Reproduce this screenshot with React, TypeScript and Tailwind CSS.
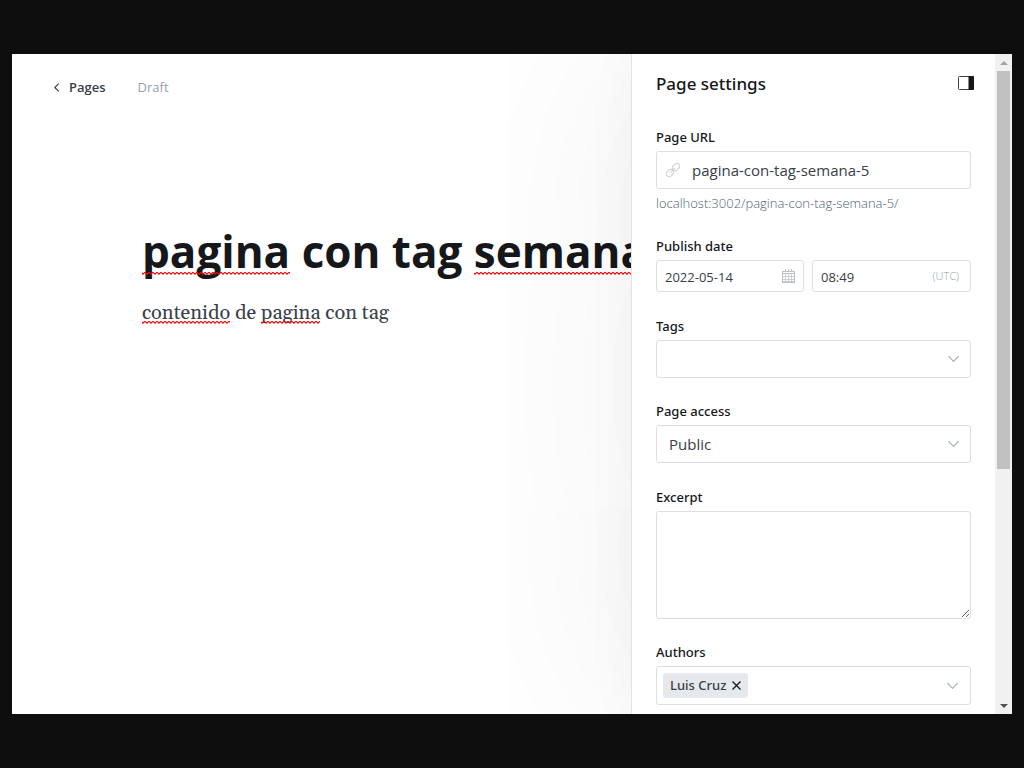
import type { ReactNode } from "react";

const labelClass =
  "block font-['Noto_Sans','Open_Sans',sans-serif] text-[13px] leading-5 font-medium text-[#15171a]";
const fieldClass =
  "block w-full rounded-[3px] border border-[#dddedf] bg-white text-[#394047] outline-none";

function Misspelled({ children, large = false }: { children: ReactNode; large?: boolean }) {
  return (
    <span className="relative inline-block">
      {children}
      <svg
        className={`absolute left-0 h-[3px] w-full ${large ? "bottom-1" : "bottom-[5px]"}`}
        aria-hidden="true"
      >
        <defs>
          <pattern id="squiggle" width="4" height="3" patternUnits="userSpaceOnUse">
            <path d="M-1 .2 1 2.200 3 .2 5 2.200" fill="none" stroke="#ff0000" strokeWidth="1.1" />
          </pattern>
        </defs>
        <rect width="100%" height="3" fill="url(#squiggle)" />
      </svg>
    </span>
  );
}

function Chevron() {
  return (
    <svg
      className="pointer-events-none absolute top-1/2 right-3 size-[11px] -translate-y-1/2"
      viewBox="0 0 11 11"
      fill="none"
      stroke="#abb4be"
      strokeWidth="1.2"
      strokeLinecap="round"
      strokeLinejoin="round"
      aria-hidden="true"
    >
      <path d="M.8 3 5.5 7.8 10.2 3" />
    </svg>
  );
}

function LinkIcon() {
  return (
    <svg
      className="pointer-events-none absolute top-1/2 left-2.5 size-[14px] -translate-y-1/2"
      viewBox="0 0 14 14"
      fill="none"
      stroke="#cfd1d3"
      strokeWidth="1.1"
      strokeLinecap="round"
      strokeLinejoin="round"
      aria-hidden="true"
    >
      <g transform="rotate(-45 7 7)">
        <rect x="-1.300" y="4.200" width="8" height="5.600" rx="2.800" />
        <rect x="7.300" y="4.200" width="8" height="5.600" rx="2.800" />
        <path d="M4 7h6" />
      </g>
    </svg>
  );
}

function CalendarIcon() {
  return (
    <svg
      className="pointer-events-none absolute top-1/2 right-2 size-[14px] -translate-y-1/2"
      viewBox="0 0 14 14"
      fill="none"
      stroke="#b9c0c7"
      aria-hidden="true"
    >
      <rect x=".5" y="2.5" width="12" height="11" />
      <path d="M.5 4.5h12M3.5 0v3M6.5 0v3M9.5 0v3" />
      <path strokeOpacity=".7" d="M3.5 5v8M6.5 5v8M9.5 5v8M1 7.5h12M1 10.5h12M1 12.500h12" />
    </svg>
  );
}

function Scrollbar() {
  return (
    <div className="relative flex w-[17px] shrink-0 flex-col bg-[#f1f1f1]">
      <button aria-label="Scroll up" className="flex h-[17px] items-center justify-center">
        <svg className="h-1 w-2" viewBox="0 0 8 4" fill="#a3a3a3">
          <path d="M4 0 8 4H0z" />
        </svg>
      </button>
      <div className="mx-0.5 flex-[7] bg-[#c1c1c1]" />
      <div className="flex-[4]" />
      <button aria-label="Scroll down" className="flex h-[17px] items-center justify-center">
        <svg className="h-1 w-2" viewBox="0 0 8 4" fill="#505050">
          <path d="M4 4 8 0H0z" />
        </svg>
      </button>
    </div>
  );
}

export default function App() {
  return (
    <div className="flex min-h-screen bg-[#0e0e0e] px-3 py-[54px] font-['Open_Sans','Noto_Sans',sans-serif]">
      <div className="flex min-w-0 flex-1 overflow-hidden bg-white">
        <main className="min-w-0 flex-1 overflow-hidden">
          <header className="flex items-center gap-8 pt-[23px] pl-10 text-[13px] leading-5">
            <a href="#pages" className="flex items-center gap-2 font-semibold text-[#394047]">
              <svg
                className="h-[9px] w-[9px]"
                viewBox="0 0 9 9"
                fill="none"
                stroke="#394047"
                strokeWidth="1.1"
                strokeLinecap="round"
                strokeLinejoin="round"
                aria-hidden="true"
              >
                <path d="M6.5 .8 2.8 4.5 6.5 8.2" />
              </svg>
              Pages
            </a>
            <span className="text-[#95a1ad]">Draft</span>
          </header>
          <article className="pt-[126px] pl-[130px] whitespace-nowrap">
            <h1 className="text-[44px] leading-[56px] font-bold text-[#15171a]">
              <Misspelled large>pagina</Misspelled> con tag <Misspelled large>semana</Misspelled>
            </h1>
            <p className="pt-[18px] font-['Gelasio','Georgia','Noto_Serif','Liberation_Serif',serif] text-[20px] leading-8 text-[#394047]">
              <Misspelled>contenido</Misspelled> de <Misspelled>pagina</Misspelled> con tag
            </p>
          </article>
        </main>

        <aside className="relative w-[364px] shrink-0 border-l border-[#e3e3e3] bg-white pb-[9px] pl-6 pr-6 shadow-[0_0_240px_rgba(0,0,0,0.07),0_0_50px_rgba(0,0,0,0.04)]">
          <div className="-mr-[3px] flex items-center justify-between pt-4">
            <h2 className="font-['Noto_Sans','Open_Sans',sans-serif] text-[17px] leading-7 font-medium text-[#15171a]">
              Page settings
            </h2>
            <button aria-label="Close settings" className="pb-0.5">
              <svg className="h-[14px] w-4" viewBox="0 0 16 14" aria-hidden="true">
                <rect x=".5" y=".5" width="15" height="13" rx="1" fill="none" stroke="#394047" />
                <path d="M10.500 0h4.500a1 1 0 0 1 1 1v12a1 1 0 0 1-1 1h-4.500z" fill="#15171a" />
              </svg>
            </button>
          </div>

          <form className="pt-[29px]">
            <div>
              <label htmlFor="url" className={labelClass}>Page URL</label>
              <div className="relative mt-1">
                <LinkIcon />
                <input
                  id="url"
                  defaultValue="pagina-con-tag-semana-5"
                  className={`${fieldClass} h-[38px] pr-3 pl-[35px] text-[15px]`}
                />
              </div>
              <p className="mt-1 text-[13px] leading-5 font-light text-[#4f5f70]">
                localhost:3002/pagina-con-tag-semana-5/
              </p>
            </div>

            <div className="mt-[23px]">
              <label htmlFor="date" className={labelClass}>Publish date</label>
              <div className="mt-1 flex gap-2">
                <div className="relative w-[148px]">
                  <input
                    id="date"
                    defaultValue="2022-05-14"
                    className={`${fieldClass} h-8 px-2 pt-0.5 text-[13px]`}
                  />
                  <CalendarIcon />
                </div>
                <div className="relative flex-1">
                  <input
                    aria-label="Publish time"
                    defaultValue="08:49"
                    className={`${fieldClass} h-8 px-2 pt-0.5 text-[13px]`}
                  />
                  <span className="absolute top-1.5 right-3 text-[11px] leading-5 font-light text-[#95a1ad]">(UTC)</span>
                </div>
              </div>
            </div>

            <div className="mt-6">
              <label htmlFor="tags" className={labelClass}>Tags</label>
              <div className="relative mt-1">
                <input id="tags" className={`${fieldClass} h-[38px] px-3 text-[15px]`} />
                <Chevron />
              </div>
            </div>

            <div className="mt-[23px]">
              <label htmlFor="access" className={labelClass}>Page access</label>
              <div className="relative mt-1">
                <select id="access" className={`${fieldClass} h-[38px] appearance-none px-3 text-[15px]`}>
                  <option>Public</option>
                </select>
                <Chevron />
              </div>
            </div>

            <div className="mt-6">
              <label htmlFor="excerpt" className={labelClass}>Excerpt</label>
              <textarea id="excerpt" className={`${fieldClass} mt-1 h-[108px] resize-y px-3 py-2 text-[15px]`} />
            </div>

            <div className="mt-[23px]">
              <label htmlFor="authors" className={labelClass}>Authors</label>
              <div className={`${fieldClass} relative mt-1`}>
                <div className="flex h-[37px] items-center px-1.5">
                  <span className="flex h-[25px] items-center gap-1.5 rounded-[3px] bg-[#e5e9ed] px-[7px] font-['Noto_Sans','Open_Sans',sans-serif] text-[13px] font-medium text-[#394047]">
                    Luis Cruz
                    <button type="button" aria-label="Remove Luis Cruz">
                      <svg className="size-[9px]" viewBox="0 0 9 9" stroke="#15171a" strokeWidth="1.3">
                        <path d="M.5.5l8 8M8.500.5l-8 8" />
                      </svg>
                    </button>
                  </span>
                  <input id="authors" className="min-w-0 flex-1 outline-none" />
                </div>
                <Chevron />
              </div>
            </div>
          </form>
        </aside>
        <Scrollbar />
      </div>
    </div>
  );
}
